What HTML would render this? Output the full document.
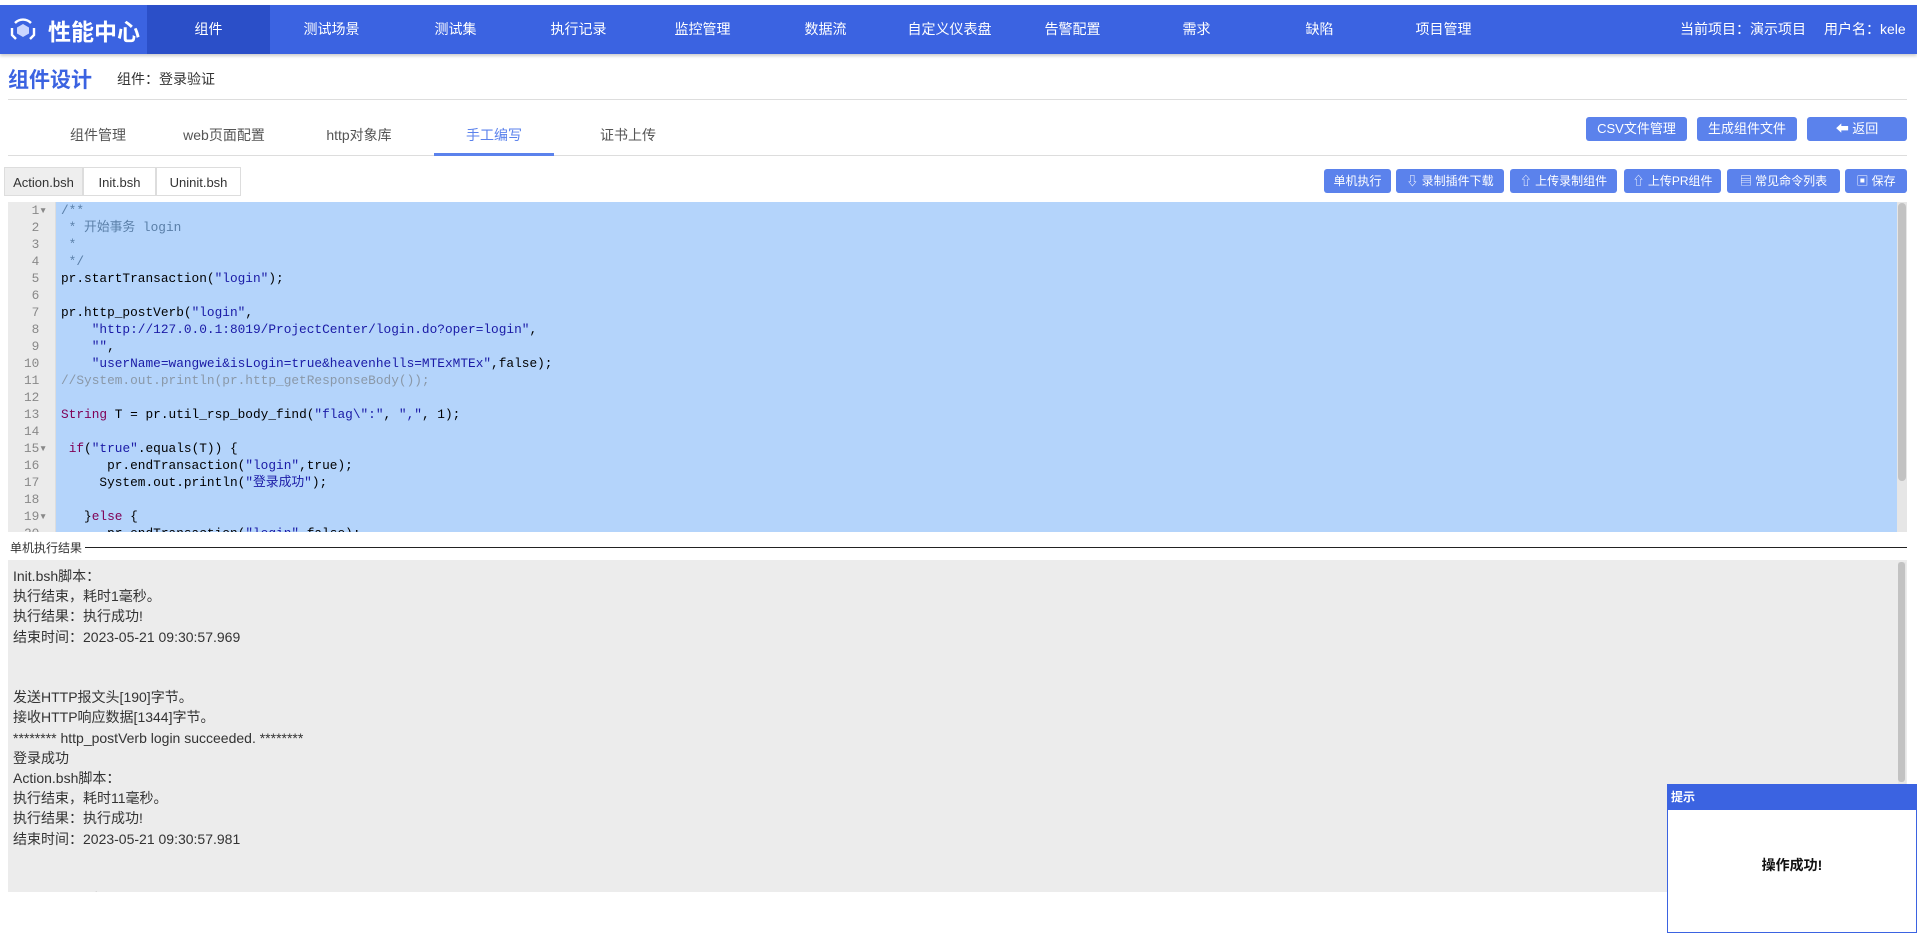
<!DOCTYPE html>
<html><head><meta charset="utf-8"><style>
*{margin:0;padding:0;box-sizing:border-box}
body{width:1917px;height:933px;overflow:hidden;background:#fff;font-family:"Liberation Sans","Noto Sans CJK SC",sans-serif;position:relative;color:#333}
.nav{position:absolute;left:0;top:5px;width:1917px;height:49px;background:#3b63e1;box-shadow:0 2px 3px rgba(0,0,0,.2)}
.nav .logo{position:absolute;left:8px;top:0;height:49px;display:flex;align-items:center;color:#fff;font-size:23px;font-weight:bold}
.nav .act{position:absolute;left:147px;top:0;width:123px;height:49px;background:#2b4fc8}
.nav .it{position:absolute;top:0;height:49px;line-height:49px;width:123px;text-align:center;color:#fff;font-size:14px}
.nav .r{position:absolute;top:0;line-height:49px;color:#fff;font-size:14px}
.title{position:absolute;left:8px;top:64px;font-size:21px;font-weight:bold;color:#3b63e1}
.sub{position:absolute;left:117px;top:69px;font-size:14px;color:#333}
.hr{position:absolute;left:8px;width:1899px;height:1px;background:#ddd}
.tab{position:absolute;top:125px;font-size:14px;color:#555;transform:translateX(-50%)}
.btn{position:absolute;background:#5b82ec;color:#fff;border-radius:3px;font-size:13px;text-align:center}
.ftab{position:absolute;top:167px;height:29px;line-height:29px;font-size:13px;color:#333;text-align:center;border:1px solid #ddd}
.ed{position:absolute;left:8px;top:202px;width:1899px;height:330px;background:#b4d4fb;overflow:hidden}
.gut{position:absolute;left:0;top:0;width:48px;height:330px;background:#ebebeb;border-right:1px solid #ddd}
.ln{position:absolute;right:8px;font:12.8px/17px "Liberation Mono",monospace;color:#888;text-align:right}
pre{position:absolute;left:53px;top:0;font:12.8px/17px "Liberation Mono","Noto Sans CJK SC",monospace;color:#000}
.s{color:#1a1aa6}.c{color:#5a7fa8}.g{color:#8a98a8}.k{color:#7f0055}
.out{position:absolute;left:8px;top:560px;width:1899px;height:332px;background:#ececec;overflow:hidden;font-size:14px;line-height:20.2px;color:#333;padding:6px 0 0 5px}
</style></head><body>
<div class="nav">
 <div class="logo"><svg width="30" height="30" viewBox="0 0 30 30" style="margin-right:10px"><path d="M15 9l6 3.5v6L15 22l-6-3.5v-6z" fill="#c9d5ff"/><path d="M7 8a11 11 0 0 1 16 0M4 13v7l4 4M26 13v7l-4 4" stroke="#fff" stroke-width="2.4" fill="none"/></svg>性能中心</div>
 <div class="act"></div>
 <div class="it" style="left:147px">组件</div><div class="it" style="left:270px">测试场景</div><div class="it" style="left:394px">测试集</div><div class="it" style="left:517px">执行记录</div><div class="it" style="left:641px">监控管理</div><div class="it" style="left:764px">数据流</div><div class="it" style="left:888px">自定义仪表盘</div><div class="it" style="left:1011px">告警配置</div><div class="it" style="left:1135px">需求</div><div class="it" style="left:1258px">缺陷</div><div class="it" style="left:1382px">项目管理</div>
 <div class="r" style="left:1680px">当前项目：演示项目</div><div class="r" style="left:1824px">用户名：kele</div>
</div>
<div class="title">组件设计</div><div class="sub">组件：登录验证</div>
<div class="hr" style="top:99px"></div>
<div class="tab" style="left:98px">组件管理</div><div class="tab" style="left:224px">web页面配置</div><div class="tab" style="left:359px">http对象库</div><div class="tab" style="left:494px;color:#5b82ec">手工编写</div><div class="tab" style="left:628px">证书上传</div>
<div class="hr" style="top:155px"></div>
<div style="position:absolute;left:434px;top:153px;width:120px;height:3px;background:#5b82ec"></div>
<div class="btn" style="left:1586px;top:117px;width:101px;height:24px;line-height:24px">CSV文件管理</div>
<div class="btn" style="left:1697px;top:117px;width:100px;height:24px;line-height:24px">生成组件文件</div>
<div class="btn" style="left:1807px;top:117px;width:100px;height:24px;line-height:24px">&#x2B05; 返回</div>
<div class="ftab" style="left:4px;width:79px;background:#eee">Action.bsh</div>
<div class="ftab" style="left:83px;width:73px;background:#fff">Init.bsh</div>
<div class="ftab" style="left:156px;width:85px;background:#fff">Uninit.bsh</div>
<div class="btn" style="left:1324px;top:169px;width:67px;height:24px;line-height:24px;font-size:12px">单机执行</div>
<div class="btn" style="left:1396px;top:169px;width:108px;height:24px;line-height:24px;font-size:12px">⇩ 录制插件下载</div>
<div class="btn" style="left:1510px;top:169px;width:107px;height:24px;line-height:24px;font-size:12px">⇧ 上传录制组件</div>
<div class="btn" style="left:1624px;top:169px;width:97px;height:24px;line-height:24px;font-size:12px">⇧ 上传PR组件</div>
<div class="btn" style="left:1727px;top:169px;width:113px;height:24px;line-height:24px;font-size:12px">▤ 常见命令列表</div>
<div class="btn" style="left:1845px;top:169px;width:62px;height:24px;line-height:24px;font-size:12px">▣ 保存</div>
<div class="ed">
 <div class="gut"><div class="ln" style="top:0">1▾<br>2&nbsp;<br>3&nbsp;<br>4&nbsp;<br>5&nbsp;<br>6&nbsp;<br>7&nbsp;<br>8&nbsp;<br>9&nbsp;<br>10&nbsp;<br>11&nbsp;<br>12&nbsp;<br>13&nbsp;<br>14&nbsp;<br>15▾<br>16&nbsp;<br>17&nbsp;<br>18&nbsp;<br>19▾<br>20&nbsp;</div></div>
<pre><span class="c">/**
 * 开始事务 login
 *
 */</span>
pr.startTransaction(<span class="s">"login"</span>);

pr.http_postVerb(<span class="s">"login"</span>,
    <span class="s">"http://127.0.0.1:8019/ProjectCenter/login.do?oper=login"</span>,
    <span class="s">""</span>,
    <span class="s">"userName=wangwei&amp;isLogin=true&amp;heavenhells=MTExMTEx"</span>,false);
<span class="g">//System.out.println(pr.http_getResponseBody());</span>

<span class="k">String</span> T = pr.util_rsp_body_find(<span class="s">"flag\":"</span>, <span class="s">","</span>, 1);

 <span class="k">if</span>(<span class="s">"true"</span>.equals(T)) {
      pr.endTransaction(<span class="s">"login"</span>,true);
     System.out.println(<span class="s">"登录成功"</span>);

   }<span class="k">else</span> {
      pr.endTransaction(<span class="s">"login"</span>,false);</pre>
 <div style="position:absolute;right:0;top:0;width:10px;height:330px;background:#e6e6e6"></div>
 <div style="position:absolute;right:1px;top:1px;width:8px;height:278px;background:#c2c2c2;border-radius:4px"></div>
</div>
<div style="position:absolute;left:10px;top:539px;font-size:12px;color:#333;background:#fff;padding-right:3px;z-index:2">单机执行结果</div>
<div style="position:absolute;left:10px;top:547px;width:1897px;height:1px;background:#222"></div>
<div class="out">Init.bsh脚本：<br>执行结束，耗时1毫秒。<br>执行结果：执行成功!<br>结束时间：2023-05-21 09:30:57.969<br><br><br>发送HTTP报文头[190]字节。<br>接收HTTP响应数据[1344]字节。<br>******** http_postVerb login succeeded. ********<br>登录成功<br>Action.bsh脚本：<br>执行结束，耗时11毫秒。<br>执行结果：执行成功!<br>结束时间：2023-05-21 09:30:57.981<br><br><br>Uninit.bsh脚本：
 <div style="position:absolute;right:1px;top:2px;width:8px;height:330px;background:#e6e6e6"></div>
 <div style="position:absolute;right:2px;top:2px;width:7px;height:220px;background:#c2c2c2;border-radius:3px"></div>
</div>
<div style="position:absolute;left:1667px;top:784px;width:250px;height:149px;border:1px solid #3b63e1;background:#fff">
 <div style="height:25px;background:#3b63e1;color:#fff;font-size:12px;font-weight:bold;line-height:25px;padding-left:3px">提示</div>
 <div style="position:absolute;left:0;width:248px;top:70px;text-align:center;font-size:14px;font-weight:bold;color:#111">操作成功!</div>
</div>
</body></html>
